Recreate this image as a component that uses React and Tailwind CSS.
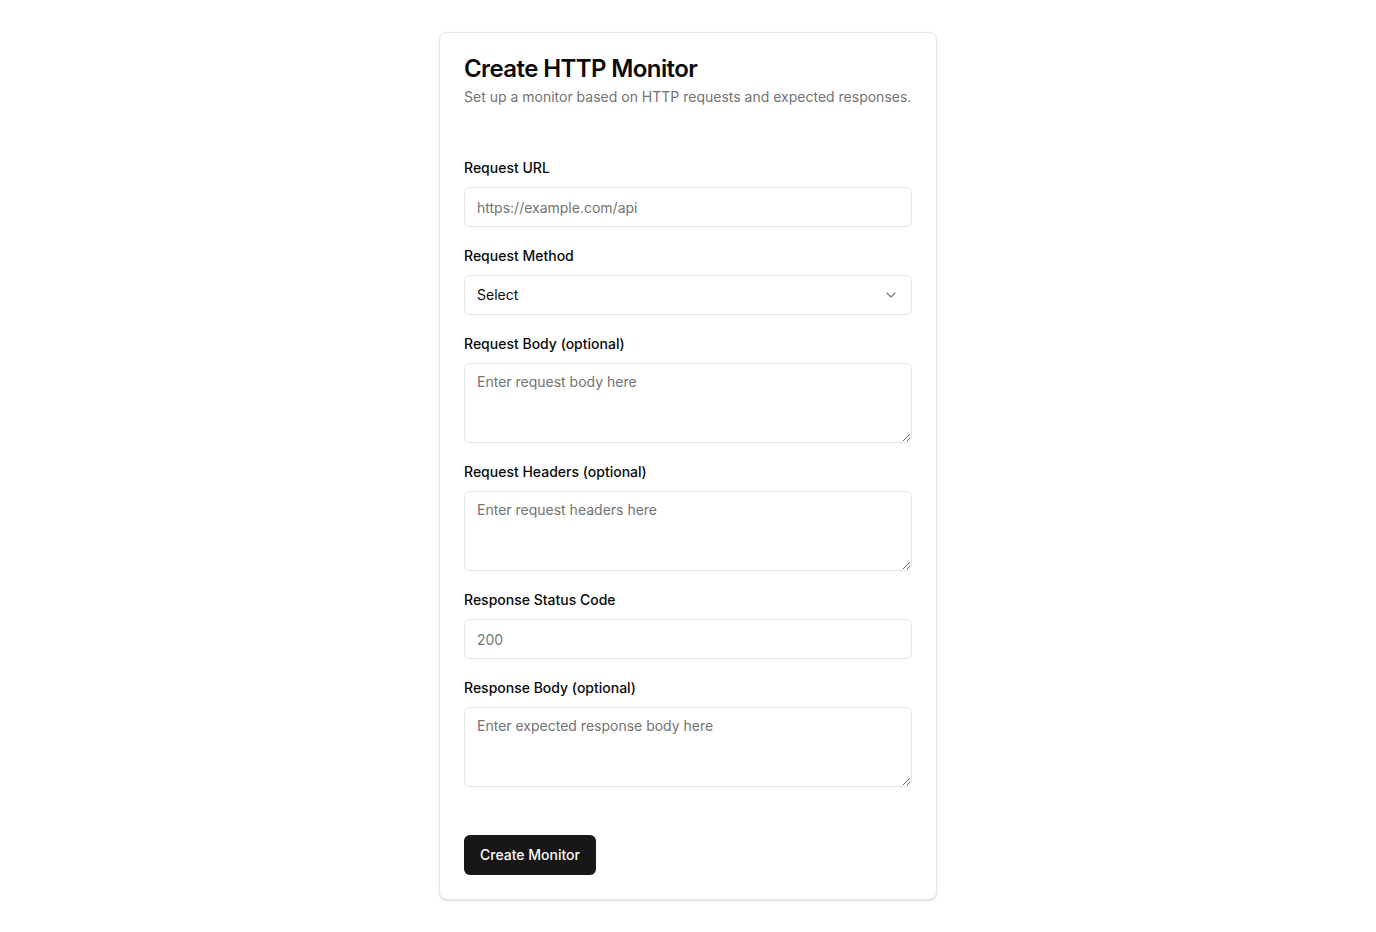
import React from 'react';
import { ChevronDown } from 'lucide-react';

function Field({ label, children }) {
  return (
    <div className="flex flex-col">
      <label className="text-sm leading-5 font-medium text-[#0a0a0a]">{label}</label>
      <div className="mt-[9px]">{children}</div>
    </div>
  );
}

const inputCls =
  'h-10 w-full rounded-md border border-[#e5e5e5] bg-white px-3 text-sm text-[#0a0a0a] placeholder:text-[#737373] outline-none';
const areaCls =
  'block h-20 w-full rounded-md border border-[#e5e5e5] bg-white px-3 py-2 text-sm leading-5 text-[#0a0a0a] placeholder:text-[#737373] outline-none';

export default function App() {
  return (
    <div className="min-h-screen bg-white pt-8 font-['Inter',sans-serif]">
      <div className="mx-auto w-[498px] rounded-lg border border-[#e5e5e5] bg-white p-6 shadow-sm">
        {/* header */}
        <h1 className="text-2xl leading-none font-semibold tracking-tight text-[#0a0a0a]">Create HTTP Monitor</h1>
        <p className="mt-1.5 text-sm leading-5 text-[#737373]">
          Set up a monitor based on HTTP requests and expected responses.
        </p>

        {/* form */}
        <form className="mt-[51px] flex flex-col gap-[19px]" onSubmit={(e) => e.preventDefault()}>
          <Field label="Request URL">
            <input className={inputCls} placeholder="https://example.com/api" />
          </Field>
          <Field label="Request Method">
            <button
              type="button"
              className="flex h-10 w-full items-center justify-between rounded-md border border-[#e5e5e5] bg-white px-3 text-sm text-[#0a0a0a]"
            >
              <span>Select</span>
              <ChevronDown className="h-4 w-4 opacity-50" />
            </button>
          </Field>
          <Field label="Request Body (optional)">
            <textarea className={areaCls} placeholder="Enter request body here" />
          </Field>
          <Field label="Request Headers (optional)">
            <textarea className={areaCls} placeholder="Enter request headers here" />
          </Field>
          <Field label="Response Status Code">
            <input className={inputCls} placeholder="200" />
          </Field>
          <Field label="Response Body (optional)">
            <textarea className={areaCls} placeholder="Enter expected response body here" />
          </Field>
          <div className="mt-[29px]">
            <button
              type="submit"
              className="h-10 rounded-md bg-[#171717] px-4 text-sm font-medium text-[#fafafa]"
            >
              Create Monitor
            </button>
          </div>
        </form>
      </div>
    </div>
  );
}
